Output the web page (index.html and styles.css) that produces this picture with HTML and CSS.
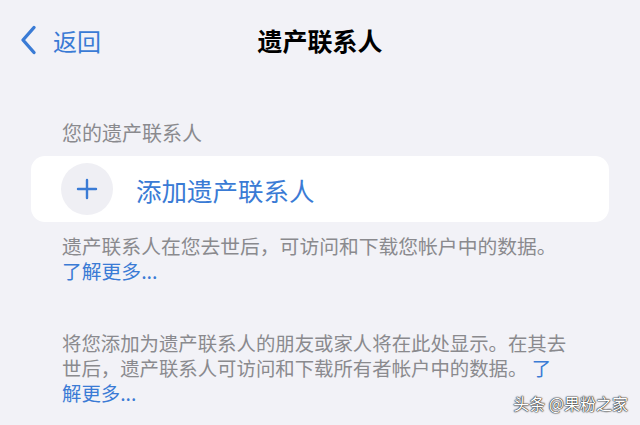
FILE: index.html
```html
<!DOCTYPE html>
<html lang="zh-CN">
<head>
  <meta charset="UTF-8">
  <title>遗产联系人</title>
  <link rel="stylesheet" href="styles.css">
</head>
<body>

<div class="screen">
  <div class="nav">
    <a class="back" href="#">
      <svg class="chevron" width="18" height="30" viewBox="0 0 18 30">
        <path d="M15 2.5 L4 15 L15 27.5" fill="none" stroke="#3a7bd5" stroke-width="3.4" stroke-linecap="round" stroke-linejoin="round"/>
      </svg>
      <span>返回</span>
    </a>
    <h1>遗产联系人</h1>
    <div></div>
  </div>

  <div class="section">
    <div class="section-title">您的遗产联系人</div>
    <div class="card">
      <div class="plus-circle">
        <svg width="22" height="22" viewBox="0 0 22 22">
          <path d="M11 2 V20 M2 11 H20" stroke="#3a7bd5" stroke-width="2.4" stroke-linecap="round"/>
        </svg>
      </div>
      <span class="add-label">添加遗产联系人</span>
    </div>
    <p class="note">遗产联系人在您去世后，可访问和下载您帐户中的数据。<br><a href="#">了解更多...</a></p>
    <p class="note note-gap">将您添加为遗产联系人的朋友或家人将在此处显示。在其去世后，遗产联系人可访问和下载所有者帐户中的数据。 <a href="#">了<br>解更多...</a></p>
  </div>

  <div class="watermark">头条 @果粉之家</div>
</div>

</body>
</html>
```

FILE: styles.css
```css
body {
  margin: 0;
  background-color: #f2f2f7;
  font-family: "Noto Sans CJK SC", "Noto Sans", sans-serif;
}

.screen {
  position: relative;
  width: 640px;
  height: 425px;
  overflow: hidden;
}

.nav {
  display: grid;
  grid-template-columns: 1fr auto 1fr;
  align-items: center;
  height: 80px;
}

.back {
  display: flex;
  align-items: center;
  gap: 16px;
  padding-left: 19px;
  color: #3a7bd5;
  text-decoration: none;
  font-size: 24px;
}

.chevron {
  display: block;
}

.nav h1 {
  margin: 0;
  font-size: 25px;
  font-weight: bold;
  color: #000;
}

.section {
  padding: 0 31px;
}

.section-title {
  margin-top: 41px;
  padding-left: 31px;
  font-size: 20px;
  line-height: 24px;
  color: #8a8a8e;
}

.card {
  display: flex;
  align-items: center;
  gap: 23px;
  margin-top: 11px;
  height: 66px;
  padding-left: 30px;
  background: white;
  border-radius: 14px;
}

.plus-circle {
  display: flex;
  align-items: center;
  justify-content: center;
  width: 52px;
  height: 52px;
  border-radius: 50%;
  background: #efeff4;
}

.add-label {
  font-size: 25.5px;
  color: #3a7bd5;
}

.note {
  margin: 11px 0 0;
  padding-left: 31px;
  width: 524px;
  font-size: 19.8px;
  line-height: 25px;
  color: #8a8a8e;
}

.note a {
  color: #3a7bd5;
  text-decoration: none;
}

.note-gap {
  margin-top: 47px;
  width: 514px;
  font-size: 19.4px;
}

.watermark {
  position: absolute;
  right: 12px;
  bottom: 10px;
  font-size: 16px;
  color: #fff;
  text-shadow: 0 0 2px #222, 0 0 1px #222, 0 0 1px #222;
}
```
